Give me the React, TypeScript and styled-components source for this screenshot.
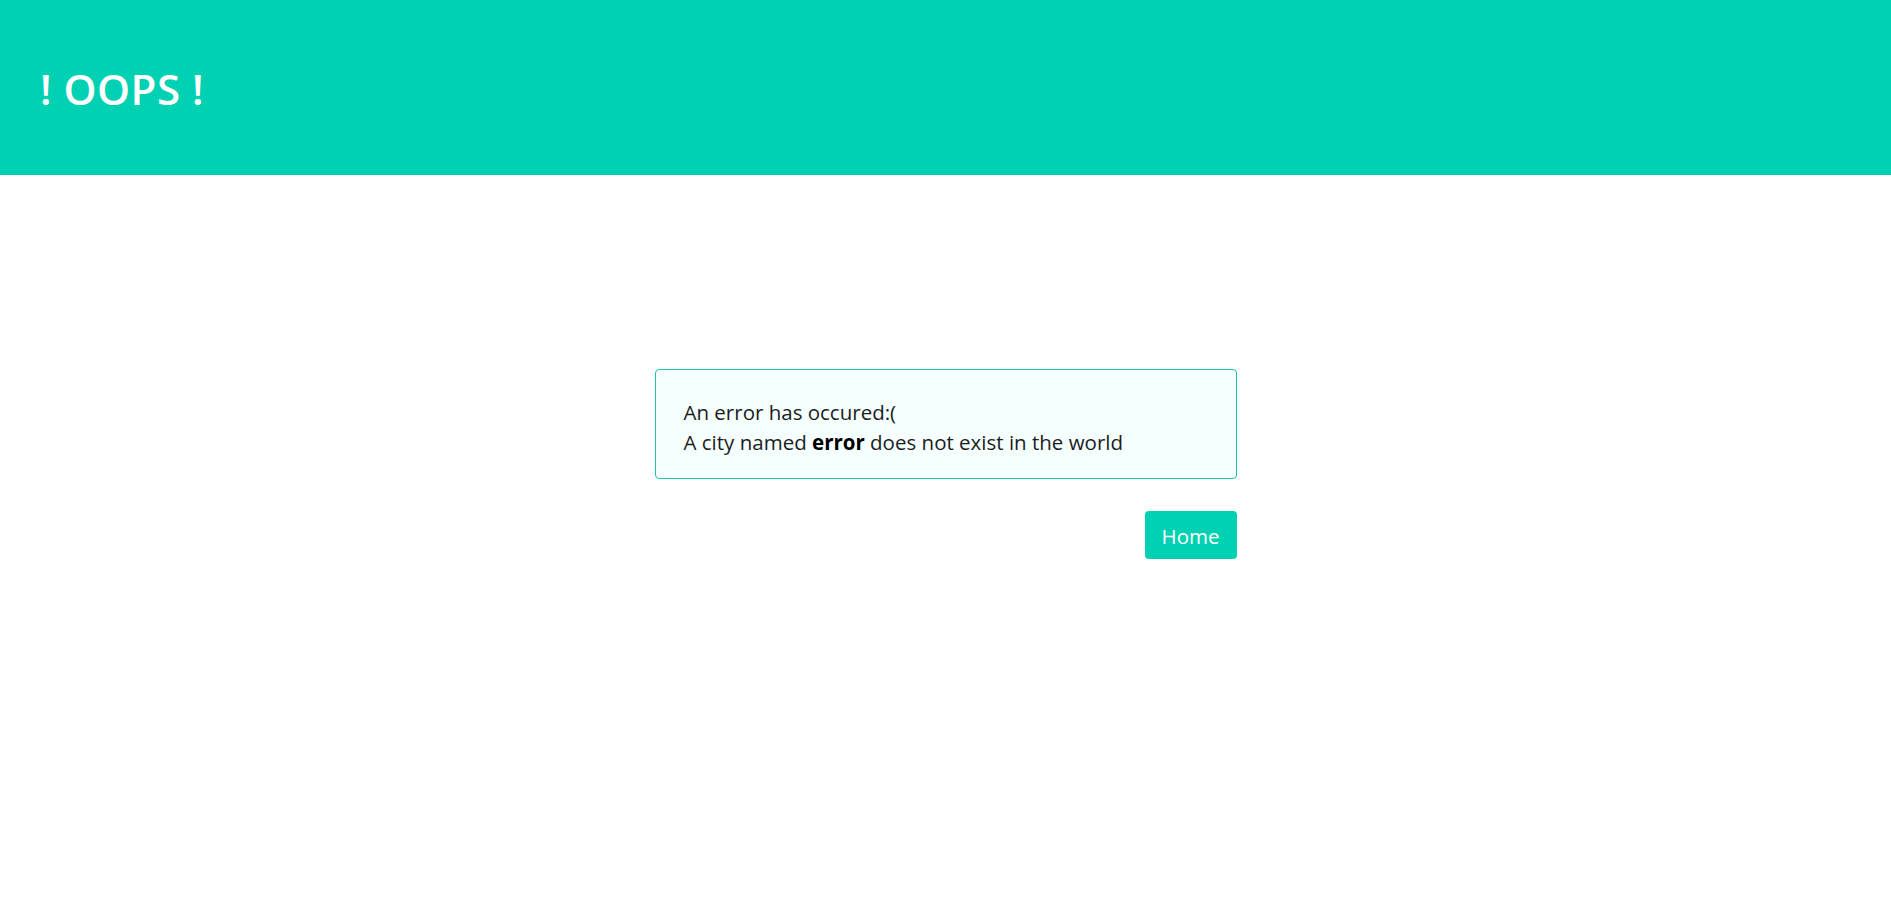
import styled, { createGlobalStyle } from "styled-components";

const GlobalStyle = createGlobalStyle`
  html, body {
    margin: 0;
    padding: 0;
    background: #fff;
  }
  body {
    font-family: "Open Sans", "Noto Sans", "Liberation Sans", sans-serif;
    color: #212529;
  }
`;

const Page = styled.div`
  min-height: 909px;
  display: flex;
  flex-direction: column;
`;

const Header = styled.header`
  height: 175px;
  background: #00d1b2;
  display: flex;
  align-items: center;
  padding: 0 40px;
  box-sizing: border-box;
`;

const Title = styled.h1`
  margin: 0;
  color: #fff;
  font-size: 42px;
  font-weight: 600;
  letter-spacing: 0.5px;
  padding-top: 2px;
`;

const Main = styled.main`
  display: flex;
  justify-content: center;
  padding-top: 194px;
`;

const Column = styled.div`
  width: 582px;
  display: flex;
  flex-direction: column;
  align-items: flex-end;
  gap: 32px;
`;

const Alert = styled.div`
  align-self: stretch;
  box-sizing: border-box;
  padding: 27px 28px 21px;
  border: 1px solid #1fc4ab;
  border-radius: 4px;
  background: #f5fffd;
  font-size: 20.5px;
  line-height: 30px;
  color: #1c1c1c;
  b {
    color: #000;
    font-weight: 700;
  }
`;

const Button = styled.button`
  height: 48px;
  padding: 2px 17px 0;
  border: none;
  border-radius: 4px;
  background: #00d1b2;
  color: #fff;
  font-family: inherit;
  font-size: 20.5px;
  cursor: pointer;
`;

export default function App() {
  return (
    <>
      <GlobalStyle />
      <Page>
        <Header>
          <Title>! OOPS !</Title>
        </Header>
        <Main>
          <Column>
            <Alert>
              An error has occured:(
              <br />
              A city named <b>error</b> does not exist in the world
            </Alert>
            <Button>Home</Button>
          </Column>
        </Main>
      </Page>
    </>
  );
}
